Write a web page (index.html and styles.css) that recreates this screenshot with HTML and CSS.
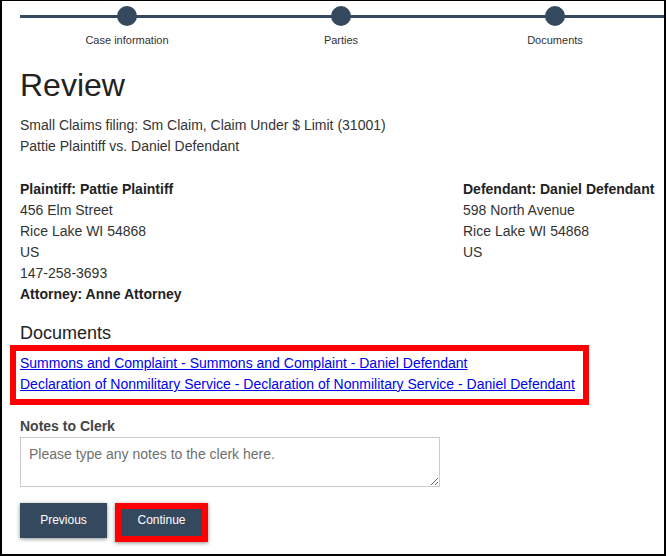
FILE: index.html
```html
<!DOCTYPE html>
<html lang="en">
<head>
    <meta charset="UTF-8">
    <meta name="viewport" content="width=device-width, initial-scale=1.0">
    <title>Review</title>
    <link rel="stylesheet" href="styles.css">
</head>
<body>
    <div class="frame">
        <!-- Progress steps -->
        <div class="stepper">
            <div class="step">
                <span class="step-dot"></span>
                <span class="step-label">Case information</span>
            </div>
            <div class="step">
                <span class="step-dot"></span>
                <span class="step-label">Parties</span>
            </div>
            <div class="step">
                <span class="step-dot"></span>
                <span class="step-label">Documents</span>
            </div>
        </div>

        <h1 class="page-title">Review</h1>
        <p class="summary">
            Small Claims filing: Sm Claim, Claim Under $ Limit (31001)<br>
            Pattie Plaintiff vs. Daniel Defendant
        </p>

        <div class="parties">
            <div class="party">
                <strong>Plaintiff: Pattie Plaintiff</strong>
                <span>456 Elm Street</span>
                <span>Rice Lake WI 54868</span>
                <span>US</span>
                <span>147-258-3693</span>
                <strong>Attorney: Anne Attorney</strong>
            </div>
            <div class="party">
                <strong>Defendant: Daniel Defendant</strong>
                <span>598 North Avenue</span>
                <span>Rice Lake WI 54868</span>
                <span>US</span>
            </div>
        </div>

        <h2 class="section-title">Documents</h2>
        <div class="doc-list highlight">
            <a href="#">Summons and Complaint - Summons and Complaint - Daniel Defendant</a>
            <a href="#">Declaration of Nonmilitary Service - Declaration of Nonmilitary Service - Daniel Defendant</a>
        </div>

        <label class="notes-label" for="notes">Notes to Clerk</label>
        <textarea id="notes" class="notes" placeholder="Please type any notes to the clerk here."></textarea>

        <div class="actions">
            <button class="button">Previous</button>
            <button class="button button-highlight">Continue</button>
        </div>
    </div>
</body>
</html>
```

FILE: styles.css
```css
* {
    margin: 0;
    padding: 0;
    box-sizing: border-box;
}

body {
    font-family: 'Liberation Sans', Arial, sans-serif;
    font-size: 14px;
    color: #333;
    background: white;
}

.frame {
    height: 556px;
    overflow: hidden;
    border: 2px solid black;
    border-top-width: 1px;
    padding-left: 18px;
}

/* Stepper */
.stepper {
    position: relative;
    display: flex;
    padding-top: 5px;
}

.stepper::before {
    content: "";
    position: absolute;
    top: 14px;
    left: 0;
    right: 0;
    height: 3px;
    background: #34495e;
}

.step {
    position: relative;
    width: 214px;
    flex-shrink: 0;
    display: flex;
    flex-direction: column;
    align-items: center;
}

.step-dot {
    width: 20px;
    height: 20px;
    border-radius: 50%;
    background: #34495e;
}

.step-label {
    margin-top: 8px;
    font-size: 11px;
    line-height: 13px;
    color: #333;
}

/* Heading */
.page-title {
    margin-top: 20px;
    font-size: 32px;
    line-height: 36px;
    font-weight: normal;
    color: #222;
}

.summary {
    margin-top: 12px;
    line-height: 21px;
}

/* Parties */
.parties {
    margin-top: 22px;
    display: grid;
    grid-template-columns: 443px 1fr;
}

.party {
    display: flex;
    flex-direction: column;
    line-height: 21px;
    white-space: nowrap;
}

.party strong {
    color: #222;
}

/* Documents */
.section-title {
    margin-top: 18px;
    font-size: 18px;
    line-height: 20px;
    font-weight: normal;
    color: #222;
}

.doc-list {
    margin-top: 2px;
    display: flex;
    flex-direction: column;
    line-height: 21px;
}

.doc-list a {
    color: #0000ee;
    align-self: flex-start;
}

.highlight {
    width: 579px;
    margin-left: -10px;
    border: 6px solid #ff0000;
    padding: 2px 4px 4px;
}

/* Notes */
.notes-label {
    display: block;
    margin-top: 11px;
    line-height: 21px;
    font-weight: bold;
    color: #444;
}

.notes {
    display: block;
    width: 420px;
    height: 50px;
    border: 1px solid #ccc;
    padding: 6px 8px;
    font-family: 'Liberation Sans', Arial, sans-serif;
    font-size: 14px;
    line-height: 20px;
    color: #333;
}

.notes::placeholder {
    color: #6f6f6f;
}

/* Buttons */
.actions {
    margin-top: 16px;
    display: flex;
    align-items: flex-start;
    gap: 8px;
}

.button {
    width: 87px;
    height: 35px;
    border: none;
    background: #34495e;
    color: white;
    font-family: 'Liberation Sans', Arial, sans-serif;
    font-size: 12px;
    padding-bottom: 1px;
    box-shadow: 0 1px 4px rgba(0, 0, 0, 0.45);
    cursor: pointer;
}

.button-highlight {
    width: 93px;
    height: 39px;
    border: 6px solid #ff0000;
    padding-bottom: 5px;
}
```
